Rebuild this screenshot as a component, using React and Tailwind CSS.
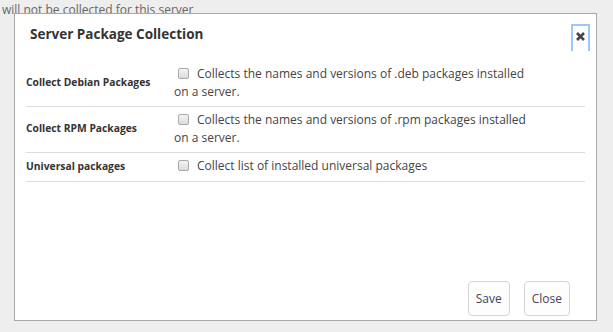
import React from "react";

const packages = [
  {
    id: "deb",
    label: "Collect Debian Packages",
    text: "Collects the names and versions of .deb packages installed",
    more: "on a server.",
  },
  {
    id: "rpm",
    label: "Collect RPM Packages",
    text: "Collects the names and versions of .rpm packages installed",
    more: "on a server.",
  },
  {
    id: "universal",
    label: "Universal packages",
    text: "Collect list of installed universal packages",
  },
];

const Checkbox = () => (
  <span className="inline-block align-[-1px] w-[11px] h-[11px] ml-[4px] mr-[8px] rounded-[2px] border border-[#a9a9a9] bg-gradient-to-b from-[#f4f4f4] to-[#dcdcdc]" />
);

const App = () => {
  return (
    <div
      className="relative w-full h-[332px] bg-[#eeeeee] overflow-hidden text-[#333]"
      style={{ fontFamily: '"Open Sans", "Noto Sans", sans-serif' }}
    >
      <div className="pl-[2px] pt-[1px] text-[12px] leading-[18px] text-[#666]">
        will not be collected for this server
      </div>

      <div className="absolute left-[14px] top-[13px] w-[583px] h-[308px] bg-white border border-[#a8a8a8] flex flex-col">
        <div className="flex items-start justify-between pl-[15px] pr-[6px] pt-[10px] h-[47px]">
          <h3 className="text-[13.5px] font-bold leading-[22px] text-[#333] -mt-[1px]">
            Server Package Collection
          </h3>
          <button className="w-[19px] h-[27px] border-2 border-b-0 border-[#9ec5fe] flex items-start justify-center pt-[6px] text-[#444]">
            <svg width="9" height="9" viewBox="0 0 9 9">
              <path d="M1 1 L8 8 M8 1 L1 8" stroke="#444" strokeWidth="2.6" strokeLinecap="butt" />
            </svg>
          </button>
        </div>

        <div className="px-[11px] flex-1">
          <table className="w-full border-collapse text-[12px]">
            <tbody>
              {packages.map((pkg) => (
                <tr key={pkg.id} className="border-b border-[#dddddd]">
                  <td className="w-[148px] align-middle pt-[4px] pb-[5px] text-[10.3px] font-bold text-[#333]">
                    {pkg.label}
                  </td>
                  <td className={`pt-[4px] leading-[18px] text-[#444] ${pkg.more ? "pb-[5px]" : "pb-[6px]"}`}>
                    <div className="w-[360px]">
                      <Checkbox />
                      {pkg.text}
                      {pkg.more && (
                        <>
                          <br />
                          {pkg.more}
                        </>
                      )}
                    </div>
                  </td>
                </tr>
              ))}
            </tbody>
          </table>
        </div>

        <div className="flex justify-end gap-[14px] pr-[26px] pb-[4px]">
          <button className="h-[35px] px-[7px] rounded-[4px] border border-[#d5d5d5] bg-[#fdfdfd] text-[12px] text-[#445]">
            Save
          </button>
          <button className="h-[35px] px-[7px] rounded-[4px] border border-[#d5d5d5] bg-[#fdfdfd] text-[12px] text-[#445]">
            Close
          </button>
        </div>
      </div>
    </div>
  );
};

export default App;
